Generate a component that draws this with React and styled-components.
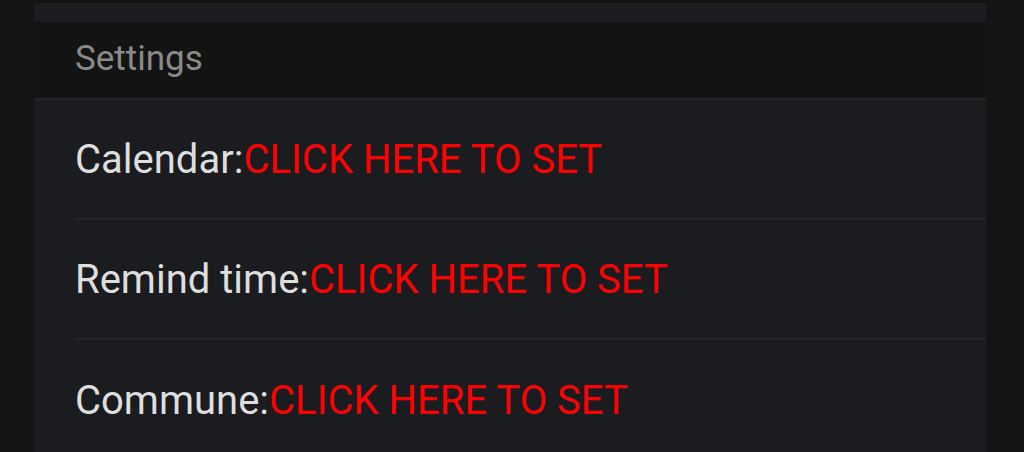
import styled, { createGlobalStyle } from "styled-components";

const GlobalStyle = createGlobalStyle`
  html, body {
    margin: 0;
    padding: 0;
    background: #131313;
    font-family: Roboto, "Noto Sans", sans-serif;
  }
`;

const rows = [
  { label: "Calendar:" },
  { label: "Remind time:" },
  { label: "Commune:" },
];

const App = () => {
  return (
    <>
      <GlobalStyle />
      <StyledPage>
        <StyledPanel>
          <StyledTopStrip />
          <StyledHeader>Settings</StyledHeader>
          <StyledList>
            {rows.map((row, i) => (
              <StyledRow key={row.label} last={i === rows.length - 1}>
                <StyledLabel>{row.label}</StyledLabel>
                <StyledAction>CLICK HERE TO SET</StyledAction>
              </StyledRow>
            ))}
          </StyledList>
        </StyledPanel>
      </StyledPage>
    </>
  );
};

const StyledPage = styled.div`
  width: 1024px;
  height: 452px;
  overflow: hidden;
  background: #141414;
  padding-top: 3px;
  box-sizing: border-box;
`;

const StyledPanel = styled.div`
  margin-left: 34px;
  width: 952px;
  display: flex;
  flex-direction: column;
`;

const StyledTopStrip = styled.div`
  height: 19px;
  background: #1c1d21;
`;

const StyledHeader = styled.div`
  height: 78px;
  box-sizing: border-box;
  padding-left: 41px;
  padding-bottom: 3px;
  display: flex;
  align-items: center;
  font-size: 35px;
  color: #8a8a8a;
  background: #131313;
  border-bottom: 2px solid #222327;
`;

const StyledList = styled.div`
  background: #1b1c20;
  display: flex;
  flex-direction: column;
`;

const StyledRow = styled.div`
  height: 120px;
  margin-left: 41px;
  box-sizing: border-box;
  display: flex;
  align-items: center;
  font-size: 40px;
  border-bottom: ${(p) => (p.last ? "none" : "2px solid #26272b")};
`;

const StyledLabel = styled.span`
  color: #dedede;
`;

const StyledAction = styled.span`
  color: #ff0000;
`;

export default App;
